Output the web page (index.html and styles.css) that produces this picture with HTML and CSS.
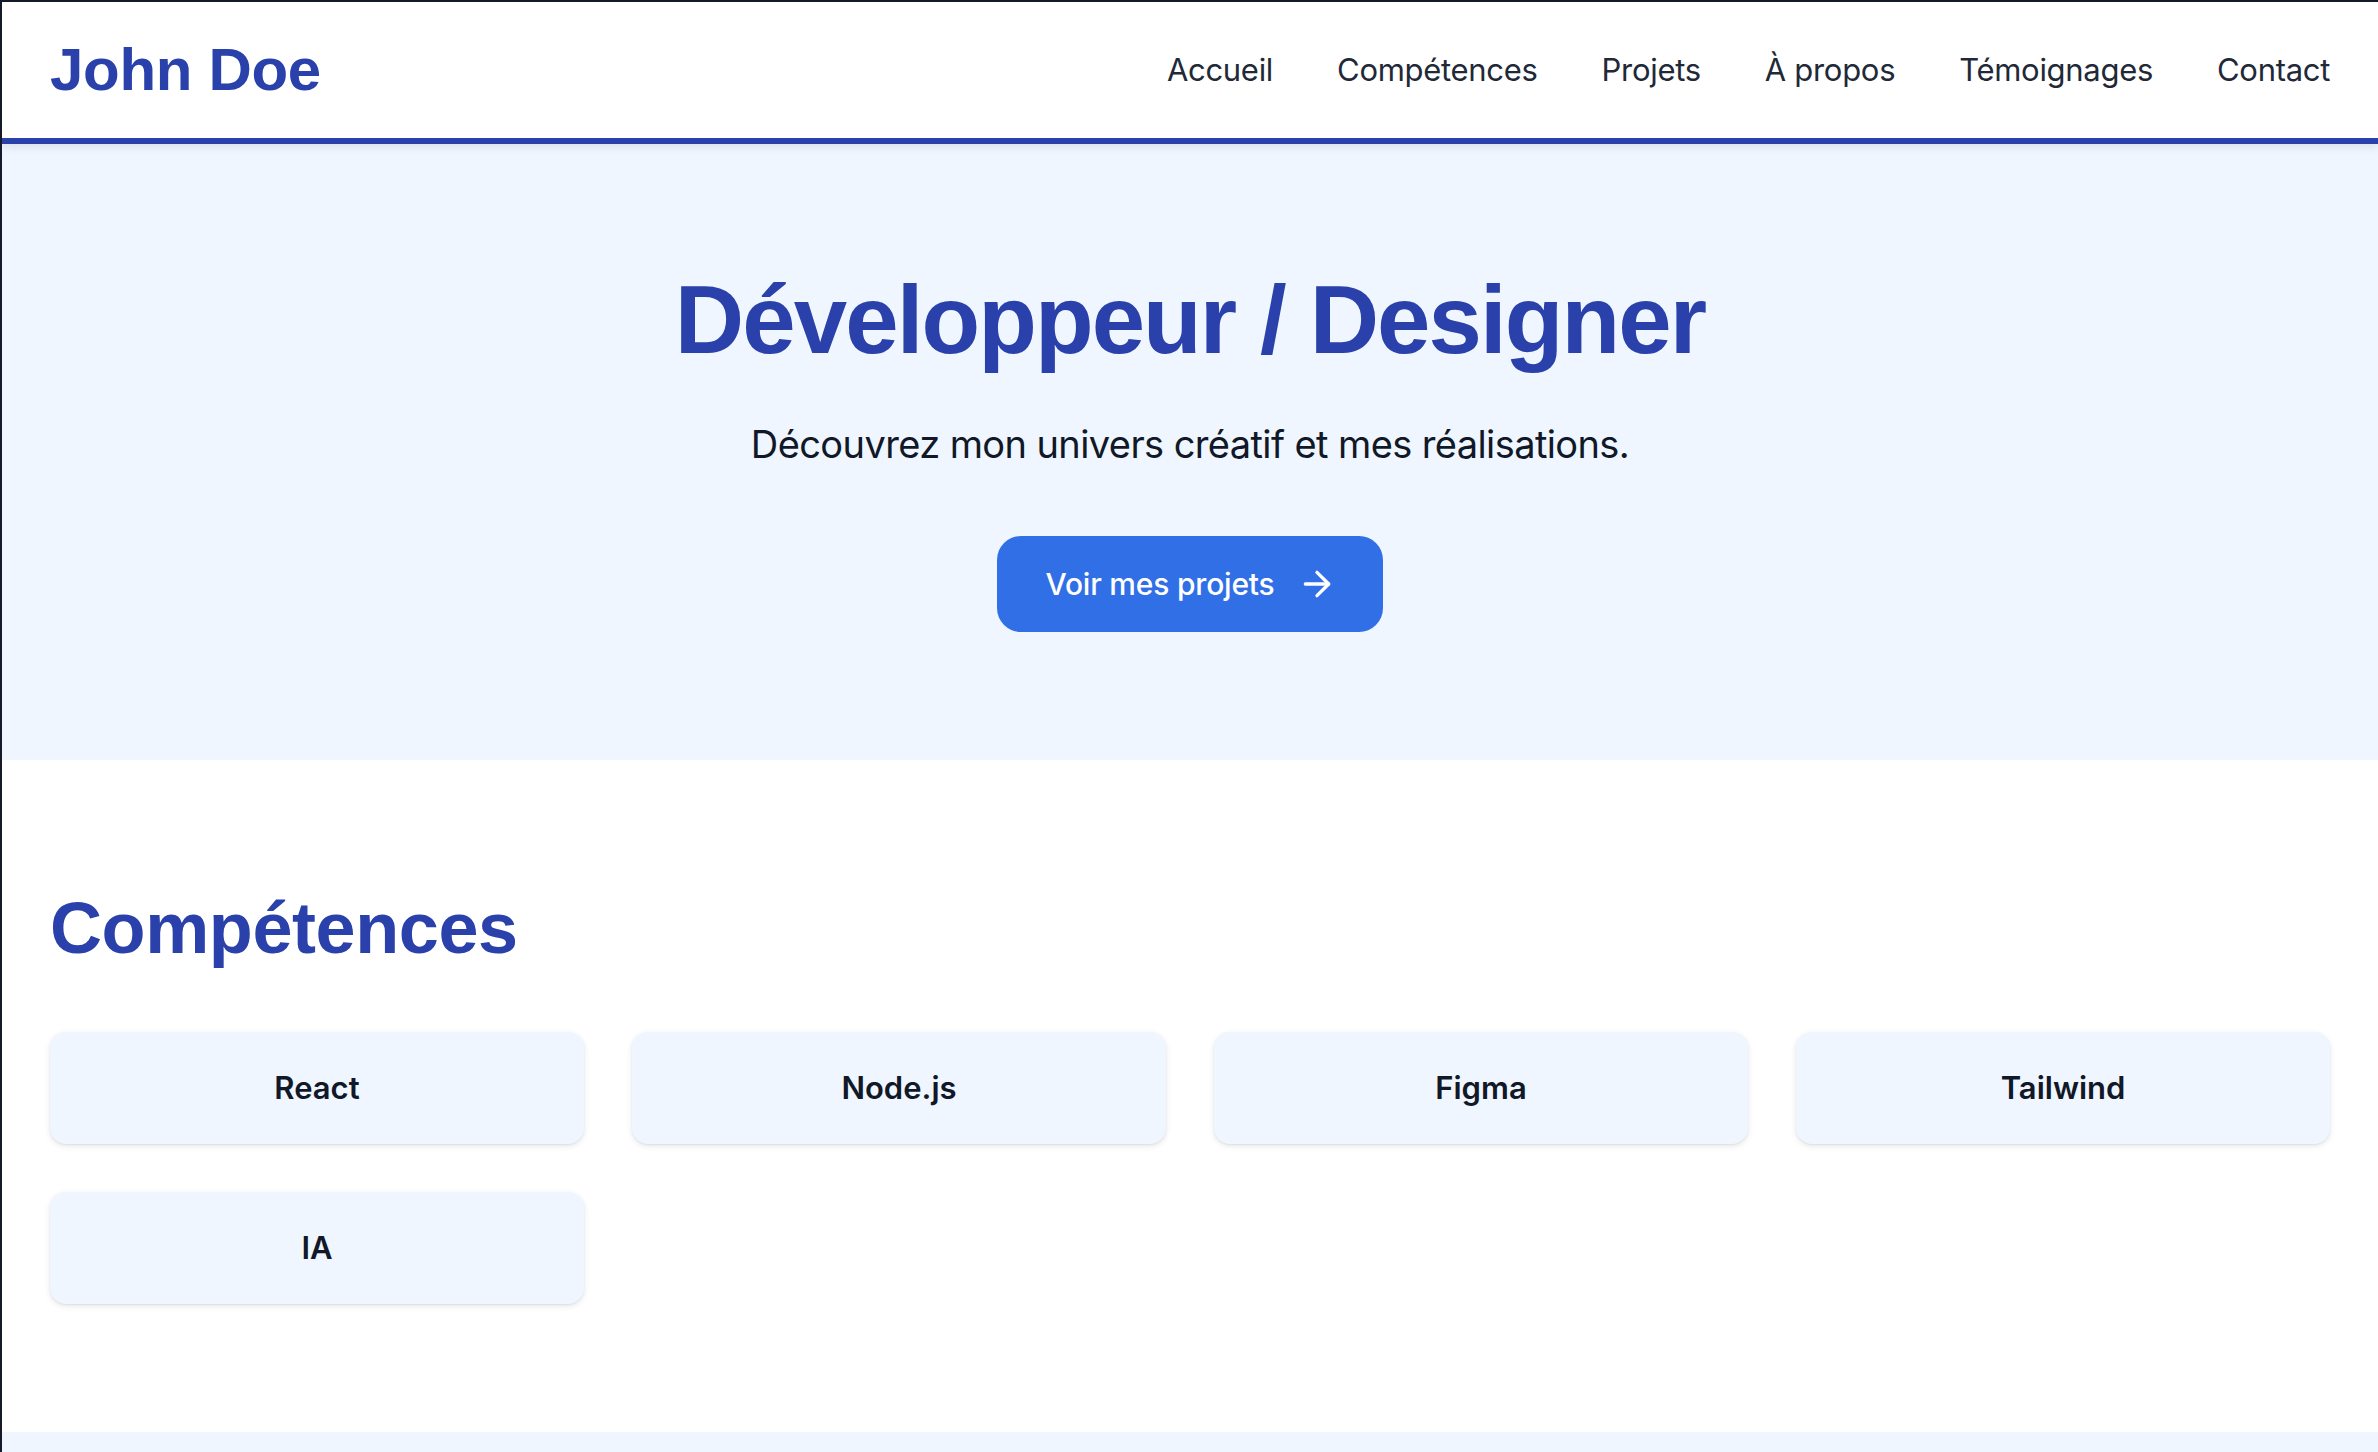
FILE: index.html
```html
<!DOCTYPE html>
<html lang="fr">
<head>
<meta charset="utf-8">
<title>John Doe — Portfolio</title>
<link rel="stylesheet" href="styles.css">
</head>
<body>
<header class="site-header">
  <a class="logo" href="#">John Doe</a>
  <nav class="nav">
    <a href="#">Accueil</a>
    <a href="#">Compétences</a>
    <a href="#">Projets</a>
    <a href="#">À propos</a>
    <a href="#">Témoignages</a>
    <a href="#">Contact</a>
  </nav>
</header>
<main>
  <section class="hero">
    <h1 class="hero-title">Développeur / Designer</h1>
    <p class="hero-sub">Découvrez mon univers créatif et mes réalisations.</p>
    <a class="btn" href="#">
      <span>Voir mes projets</span>
      <svg class="btn-icon" viewBox="0 0 24 24" fill="none" stroke="currentColor" stroke-width="2" stroke-linecap="round" stroke-linejoin="round"><path d="M5 12h14"/><path d="M12 5l7 7-7 7"/></svg>
    </a>
  </section>
  <section class="skills">
    <h2 class="section-title">Compétences</h2>
    <div class="skill-grid">
      <div class="skill-card">React</div>
      <div class="skill-card">Node.js</div>
      <div class="skill-card">Figma</div>
      <div class="skill-card">Tailwind</div>
      <div class="skill-card">IA</div>
    </div>
  </section>
  <section class="next-section"></section>
</main>
</body>
</html>
```

FILE: styles.css
```css
* { box-sizing: border-box; margin: 0; padding: 0; }

body {
  background: #ffffff;
  border-top: 2px solid #141a2a;
  border-left: 2px solid #141a2a;
  font-family: Inter, "Noto Sans", sans-serif;
  color: #111827;
  overflow: hidden;
}

a { text-decoration: none; color: inherit; }

.site-header {
  display: flex;
  align-items: center;
  justify-content: space-between;
  padding: 32px 48px;
  background: #ffffff;
  border-bottom: 6px solid #2a40aa;
  box-shadow: 0 4px 8px rgba(0, 0, 0, 0.08);
  position: relative;
  z-index: 2;
}

.logo {
  font-family: "Liberation Sans", Arial, sans-serif;
  font-weight: 700;
  font-size: 60px;
  line-height: 72px;
  letter-spacing: -0.3px;
  color: #2a40aa;
}

.nav {
  display: flex;
  gap: 64px;
}

.nav a {
  font-size: 31px;
  line-height: 48px;
  letter-spacing: -0.3px;
  color: #1f2937;
}

.hero {
  background: #eff6ff;
  padding: 128px 48px;
  display: flex;
  flex-direction: column;
  align-items: center;
  text-align: center;
}

.hero-title {
  font-family: "Liberation Sans", Arial, sans-serif;
  font-weight: 700;
  font-size: 96px;
  line-height: 96px;
  letter-spacing: -1.9px;
  color: #2a40aa;
  margin-bottom: 48px;
}

.hero-sub {
  font-size: 38px;
  line-height: 56px;
  letter-spacing: -0.6px;
  color: #111827;
  margin-bottom: 64px;
}

.btn {
  display: inline-flex;
  align-items: center;
  gap: 22px;
  padding: 24px 46px 24px 48px;
  background: #316fe6;
  color: #ffffff;
  border-radius: 24px;
  font-size: 30px;
  line-height: 48px;
  letter-spacing: -0.2px;
  font-weight: 500;
}

.btn-icon {
  width: 40px;
  height: 40px;
}

.skills {
  padding: 128px 48px;
  background: #ffffff;
}

.section-title {
  font-family: "Liberation Sans", Arial, sans-serif;
  font-weight: 700;
  font-size: 72px;
  line-height: 80px;
  letter-spacing: -0.4px;
  color: #2a40aa;
  margin-bottom: 64px;
}

.skill-grid {
  display: grid;
  grid-template-columns: repeat(4, 1fr);
  gap: 48px;
}

.skill-card {
  background: #eff6ff;
  border-radius: 16px;
  padding: 32px;
  text-align: center;
  font-size: 31px;
  line-height: 48px;
  font-weight: 600;
  color: #111827;
  box-shadow: 0 2px 6px rgba(0, 0, 0, 0.1), 0 1px 2px rgba(0, 0, 0, 0.06);
}

.next-section {
  background: #eff6ff;
  height: 20px;
}
```
